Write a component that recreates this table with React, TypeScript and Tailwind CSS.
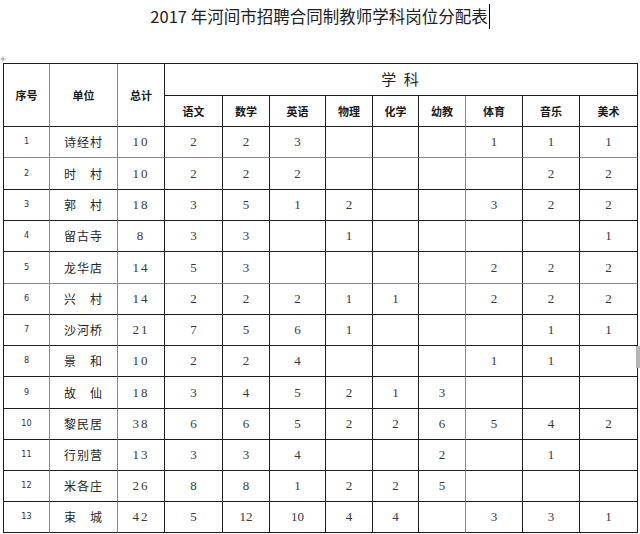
const widths = [46, 68, 47, 58, 47, 56, 47, 46, 47, 57, 57, 58]
const subjects = ["语文", "数学", "英语", "物理", "化学", "幼教", "体育", "音乐", "美术"]
const rowHeights = [31, 32, 31, 31, 32, 31, 31, 31, 32, 31, 31, 31, 31]

// [单位, 总计, ...9 科目]  ("" = 空)
const rows: string[][] = [
  ["诗经村", "10", "2", "2", "3", "", "", "", "1", "1", "1"],
  ["时　村", "10", "2", "2", "2", "", "", "", "", "2", "2"],
  ["郭　村", "18", "3", "5", "1", "2", "", "", "3", "2", "2"],
  ["留古寺", "8", "3", "3", "", "1", "", "", "", "", "1"],
  ["龙华店", "14", "5", "3", "", "", "", "", "2", "2", "2"],
  ["兴　村", "14", "2", "2", "2", "1", "1", "", "2", "2", "2"],
  ["沙河桥", "21", "7", "5", "6", "1", "", "", "", "1", "1"],
  ["景　和", "10", "2", "2", "4", "", "", "", "1", "1", ""],
  ["故　仙", "18", "3", "4", "5", "2", "1", "3", "", "", ""],
  ["黎民居", "38", "6", "6", "5", "2", "2", "6", "5", "4", "2"],
  ["行别营", "13", "3", "3", "4", "", "", "2", "", "1", ""],
  ["米各庄", "26", "8", "8", "1", "2", "2", "5", "", "", ""],
  ["束　城", "42", "5", "12", "10", "4", "4", "", "3", "3", "1"],
]

// columns whose right rule prints lighter in the scan
const grayCols = [0, 1, 8]
const grayRows = [0, 4]

const cjk = "font-['Noto_Sans_CJK_SC',sans-serif]"

export default function App() {
  return (
    <div className="relative w-[640px] h-[534px] overflow-hidden bg-white">
      {/* Title */}
      <div className={`h-[63px] pt-[2px] text-center text-[16.5px] leading-[28px] text-[#222] ${cjk}`}>
        2017 年河间市招聘合同制教师学科岗位分配表
        <span className="inline-block w-px h-[25px] ml-[1px] -mb-[6px] bg-black" />
      </div>

      {/* Word table anchor mark */}
      <svg className="absolute left-[0px] top-[56px]" width="6" height="6" viewBox="0 0 6 6">
        <path d="M3 0.5V5.5M0.5 3H5.5" stroke="#999" strokeWidth="1" />
      </svg>

      {/* row resize handle */}
      <div className="absolute left-[636px] top-[346px] w-[4px] h-[22px] bg-[#b5b5b5]" />

      <div className="ml-[3px] w-[635px] border-l border-t border-[#1e1e1e]">
        {/* Header */}
        <div className={`flex text-[11px] font-bold text-[#1a1a1a] ${cjk}`}>
          <div className="w-[46px] h-[63px] box-border border-r border-b border-r-[#8a8a8a] border-b-[#1e1e1e] flex items-center justify-center">
            序号
          </div>
          <div className="w-[68px] h-[63px] box-border border-r border-b border-r-[#8a8a8a] border-b-[#1e1e1e] flex items-center justify-center">
            单位
          </div>
          <div className="w-[47px] h-[63px] box-border border-r border-b border-[#1e1e1e] flex items-center justify-center">
            总计
          </div>
          <div className="flex flex-col">
            <div className="h-[32px] box-border border-r border-b border-[#1e1e1e] flex items-center justify-center text-[15px] font-normal text-[#222] tracking-[2px]">
              学 科
            </div>
            <div className="flex">
              {subjects.map((s, i) => (
                <div
                  key={s}
                  style={{ width: widths[i + 3] }}
                  className={`h-[31px] box-border border-r border-b border-b-[#1e1e1e] flex items-center justify-center ${
                    grayCols.includes(i + 3) ? "border-r-[#8a8a8a]" : "border-r-[#1e1e1e]"
                  }`}
                >
                  {s}
                </div>
              ))}
            </div>
          </div>
        </div>

        {/* Body */}
        {rows.map((r, ri) => (
          <div key={ri} className="flex" style={{ height: rowHeights[ri] }}>
            {[String(ri + 1), ...r].map((v, ci) => {
              let font = "font-['Liberation_Serif',serif] text-[13px] text-[#3a3a3a]"
              if (ci === 0) font = "font-['DejaVu_Sans_Condensed','DejaVu_Sans',sans-serif] text-[9px] text-[#333]"
              if (ci === 1) font = `${cjk} text-[12px] tracking-[1px] text-[#262626]`
              if (ci === 2) font = "font-['Liberation_Serif',serif] text-[13px] tracking-[2px] text-[#3a3a3a]"
              return (
                <div
                  key={ci}
                  style={{ width: widths[ci] }}
                  className={`h-full box-border border-r border-b flex items-center justify-center ${font} ${
                    grayCols.includes(ci) ? "border-r-[#8a8a8a]" : "border-r-[#1e1e1e]"
                  } ${grayRows.includes(ri) ? "border-b-[#8a8a8a]" : "border-b-[#1e1e1e]"}`}
                >
                  {v}
                </div>
              )
            })}
          </div>
        ))}
      </div>
    </div>
  )
}
